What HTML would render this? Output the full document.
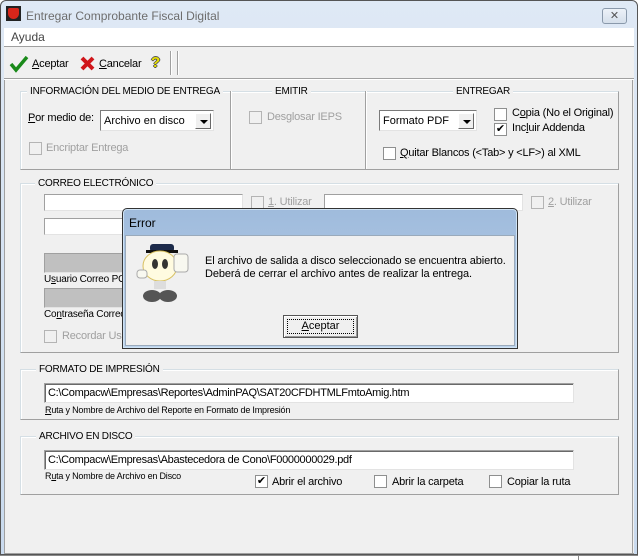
<!DOCTYPE html>
<html><head><meta charset="utf-8"><style>
*{box-sizing:border-box;margin:0;padding:0}
body{width:638px;height:560px;position:relative;overflow:hidden;background:#fff;font-family:"Liberation Sans",sans-serif;font-size:11px;color:#000}
.a{position:absolute;white-space:nowrap}
.grp{position:absolute;border:1px solid #d5dfe5;border-right-color:#a0a0a0;border-bottom-color:#a0a0a0;box-shadow:inset 1px 1px 0 #fff}
.lt{position:absolute;background:#f0f0f0;padding:0 3px;font-size:10px;letter-spacing:-0.2px}
.cb{position:absolute;width:13px;height:13px;border:1px solid #8e8f8f;background:#fff}
.cb.d{background:#f0f0f0;border-color:#b4b4b4}
.dis{color:#a0a0a0}
.t{font-size:11px;letter-spacing:-0.2px}
.inp{position:absolute;background:#fff;border:1px solid #a0a0a0;border-right-color:#e3e3e3;border-bottom-color:#e3e3e3;box-shadow:inset 1px 1px 0 #696969}
.combo{position:absolute;background:#fff;border:1px solid #7a7a7a;border-right-color:#e3e3e3;border-bottom-color:#e3e3e3;padding:4px 3px;font-size:11px}
.arr{position:absolute;right:2px;top:2px;width:16px;height:16px;background:#f0f0f0;border:1px solid #fff;border-right-color:#696969;border-bottom-color:#696969}
.arr:after{content:"";position:absolute;left:4px;top:6px;border:4px solid transparent;border-top:4px solid #000;border-bottom:0}
u{text-decoration:underline}
</style></head><body>
<div class="a" style="left:0;top:0;width:638px;height:555px;background:linear-gradient(#dfe9f5,#c9daee);border:1px solid #555;border-radius:6px 6px 0 0"></div>
<div class="a" style="left:6px;top:6px;width:15px;height:15px;background:#222"><div style="margin:2px;width:11px;height:11px;background:#d8261a;border-radius:2px 2px 6px 6px"></div></div>
<div class="a" style="left:26px;top:9px;font-size:12px;color:#6d6d6d">Entregar Comprobante Fiscal Digital</div>
<div class="a" style="left:602px;top:8px;width:25px;height:16px;border:1px solid #8a99ab;border-radius:3px;background:linear-gradient(#edf2f8,#d5dfeb);text-align:center;font-size:11px;line-height:14px;color:#555">✕</div>
<div class="a" style="left:4px;top:28px;width:630px;height:18px;background:#fff"></div>
<div class="a" style="left:11px;top:30px;font-size:12px;color:#444">Ayuda</div>
<div class="a" style="left:4px;top:46px;width:630px;height:508px;background:#f0f0f0;border-top:1px solid #a0a0a0;border-bottom:1px solid #a0a0a0"></div>
<div class="a" style="left:4px;top:78px;width:630px;height:1px;background:#a0a0a0"></div>
<div class="a" style="left:4px;top:79px;width:630px;height:1px;background:#fff"></div>
<div class="a" style="left:4px;top:80px;width:1px;height:473px;background:#a0a0a0"></div>
<div class="a" style="left:632px;top:80px;width:1px;height:473px;background:#a0a0a0"></div>
<svg class="a" style="left:9px;top:55px" width="20" height="18"><path d="M2 9 L7 15 L18 2" stroke="#1a8a1a" stroke-width="3.5" fill="none"/></svg>
<div class="a t" style="left:32px;top:58px"><u>A</u>ceptar</div>
<svg class="a" style="left:79px;top:55px" width="17" height="17"><path d="M3 3 L14 14 M14 3 L3 14" stroke="#d0161b" stroke-width="4"/></svg>
<div class="a t" style="left:99px;top:58px"><u>C</u>ancelar</div>
<div class="a" style="left:151px;top:54px;font-size:15px;font-weight:bold;color:#e8e000;text-shadow:1px 0 #555,-1px 0 #555,0 1px #555,0 -1px #555">?</div>
<div class="a" style="left:170px;top:51px;width:2px;height:24px;border-left:1px solid #a0a0a0;border-right:1px solid #fff"></div>
<div class="a" style="left:177px;top:51px;width:2px;height:24px;border-left:1px solid #a0a0a0;border-right:1px solid #fff"></div>

<div class="grp" style="left:20px;top:91px;width:599px;height:79px"></div>
<div class="a" style="left:230px;top:91px;width:2px;height:78px;border-left:1px solid #a0a0a0;border-right:1px solid #fff"></div>
<div class="a" style="left:365px;top:91px;width:2px;height:78px;border-left:1px solid #a0a0a0;border-right:1px solid #fff"></div>
<div class="lt" style="left:27px;top:86px">INFORMACIÓN DEL MEDIO DE ENTREGA</div>
<div class="lt" style="left:272px;top:86px">EMITIR</div>
<div class="lt" style="left:453px;top:86px">ENTREGAR</div>
<div class="a t" style="left:28px;top:112px"><u>P</u>or medio de:</div>
<div class="combo" style="left:100px;top:110px;width:114px;height:21px">Archivo en disco<div class="arr"></div></div>
<div class="cb d" style="left:29px;top:142px"></div><div class="a dis t" style="left:46px;top:142px">Encriptar Entrega</div>
<div class="cb d" style="left:249px;top:111px"></div><div class="a dis t" style="left:267px;top:111px">Desglosar IEPS</div>
<div class="combo" style="left:379px;top:110px;width:98px;height:21px">Formato PDF<div class="arr"></div></div>
<div class="cb" style="left:494px;top:108px"></div><div class="a t" style="left:512px;top:107px">C<u>o</u>pia (No el Original)</div>
<div class="cb" style="left:494px;top:123px;font-size:11px;line-height:11px;text-align:center">✔</div><div class="a t" style="left:512px;top:122px">Inc<u>l</u>uir Addenda</div>
<div class="cb" style="left:383px;top:147px"></div><div class="a t" style="left:400px;top:147px"><u>Q</u>uitar Blancos (&lt;Tab&gt; y &lt;LF&gt;) al XML</div>

<div class="grp" style="left:20px;top:183px;width:599px;height:170px"></div>
<div class="lt" style="left:35px;top:178px">CORREO ELECTRÓNICO</div>
<div class="inp" style="left:44px;top:194px;width:199px;height:17px;box-shadow:none"></div>
<div class="inp" style="left:44px;top:218px;width:199px;height:17px;box-shadow:none"></div>
<div class="cb d" style="left:251px;top:196px"></div><div class="a dis t" style="left:268px;top:196px"><u>1</u>. Utilizar</div>
<div class="inp" style="left:324px;top:194px;width:199px;height:17px;box-shadow:none"></div>
<div class="cb d" style="left:531px;top:196px"></div><div class="a dis t" style="left:548px;top:196px"><u>2</u>. Utilizar</div>
<div class="a" style="left:44px;top:253px;width:200px;height:20px;background:#c0c0c0;border:1px solid #e3e3e3;border-top-color:#a0a0a0;border-left-color:#a0a0a0"></div>
<div class="a" style="left:44px;top:274px;font-size:10px;letter-spacing:-0.2px">U<u>s</u>uario Correo POP</div>
<div class="a" style="left:44px;top:288px;width:200px;height:20px;background:#c0c0c0;border:1px solid #e3e3e3;border-top-color:#a0a0a0;border-left-color:#a0a0a0"></div>
<div class="a" style="left:44px;top:309px;font-size:10px;letter-spacing:-0.2px">Co<u>n</u>traseña Correo</div>
<div class="cb d" style="left:44px;top:330px"></div><div class="a dis t" style="left:62px;top:330px">Recordar Usuario</div>

<div class="grp" style="left:20px;top:369px;width:599px;height:51px"></div>
<div class="lt" style="left:36px;top:364px">FORMATO DE IMPRESIÓN</div>
<div class="inp" style="left:44px;top:383px;width:530px;height:20px;font-size:11px;letter-spacing:-0.3px;padding:3px 3px">C:\Compacw\Empresas\Reportes\AdminPAQ\SAT20CFDHTMLFmtoAmig.htm</div>
<div class="a" style="left:45px;top:405px;font-size:9px;letter-spacing:-0.2px"><u>R</u>uta y Nombre de Archivo del Reporte en Formato de Impresión</div>

<div class="grp" style="left:20px;top:436px;width:599px;height:59px"></div>
<div class="lt" style="left:36px;top:431px">ARCHIVO EN DISCO</div>
<div class="inp" style="left:44px;top:450px;width:530px;height:20px;font-size:11px;letter-spacing:-0.3px;padding:3px 3px">C:\Compacw\Empresas\Abastecedora de Cono\F0000000029.pdf</div>
<div class="a" style="left:45px;top:471px;font-size:9px;letter-spacing:-0.2px">R<u>u</u>ta y Nombre de Archivo en Disco</div>
<div class="cb" style="left:255px;top:475px;font-size:11px;line-height:11px;text-align:center">✔</div><div class="a t" style="left:272px;top:476px">Abrir el archivo</div>
<div class="cb" style="left:374px;top:475px"></div><div class="a t" style="left:392px;top:476px">Abrir la carpeta</div>
<div class="cb" style="left:489px;top:475px"></div><div class="a t" style="left:507px;top:476px">Copiar la ruta</div>

<div class="a" style="left:0;top:555px;width:638px;height:5px;background:#fff;border-top:1px solid #888"></div>
<div class="a" style="left:578px;top:556px;width:60px;height:4px;border-left:1px solid #888"></div>

<div class="a" style="left:122px;top:208px;width:396px;height:141px;border:1px solid #333;border-radius:5px 5px 0 0;background:linear-gradient(#9fbbdc,#bcd3ec);box-shadow:inset 0 0 0 1px #cfe3f5"></div>
<div class="a" style="left:129px;top:216px;font-size:12px">Error</div>
<div class="a" style="left:125px;top:235px;width:390px;height:111px;background:#f0f0f0;border:1px solid #9aaabb"></div>
<svg class="a" style="left:134px;top:244px" width="64" height="60">
<rect x="16" y="0" width="24" height="8" rx="3" fill="#1c2a4a"/><rect x="12" y="6" width="32" height="3" fill="#111"/>
<ellipse cx="26" cy="22" rx="17" ry="15" fill="#fffbe0" stroke="#d8c060"/>
<ellipse cx="21" cy="20" rx="3" ry="5" fill="#333"/><ellipse cx="31" cy="20" rx="3" ry="5" fill="#333"/>
<rect x="40" y="10" width="14" height="18" rx="3" fill="#f8f8f0" stroke="#aaa"/>
<rect x="3" y="26" width="10" height="8" rx="3" fill="#f8f8f0" stroke="#aaa"/>
<rect x="20" y="37" width="12" height="8" fill="#ddd"/>
<ellipse cx="18" cy="52" rx="9" ry="6" fill="#555"/><ellipse cx="34" cy="52" rx="9" ry="6" fill="#555"/>
</svg>
<div class="a" style="left:205px;top:255px;font-size:11px;line-height:13px;letter-spacing:-0.1px">El archivo de salida a disco seleccionado se encuentra abierto.<br>Deberá de cerrar el archivo antes de realizar la entrega.</div>
<div class="a" style="left:283px;top:315px;width:75px;height:23px;border:1px solid #555;background:#f0f0f0;box-shadow:inset 1px 1px 0 #fff,inset -1px -1px 0 #999"><div style="margin:3px;height:15px;border:1px dotted #000;text-align:center;font-size:11px;line-height:13px"><u>A</u>ceptar</div></div>
</body></html>
